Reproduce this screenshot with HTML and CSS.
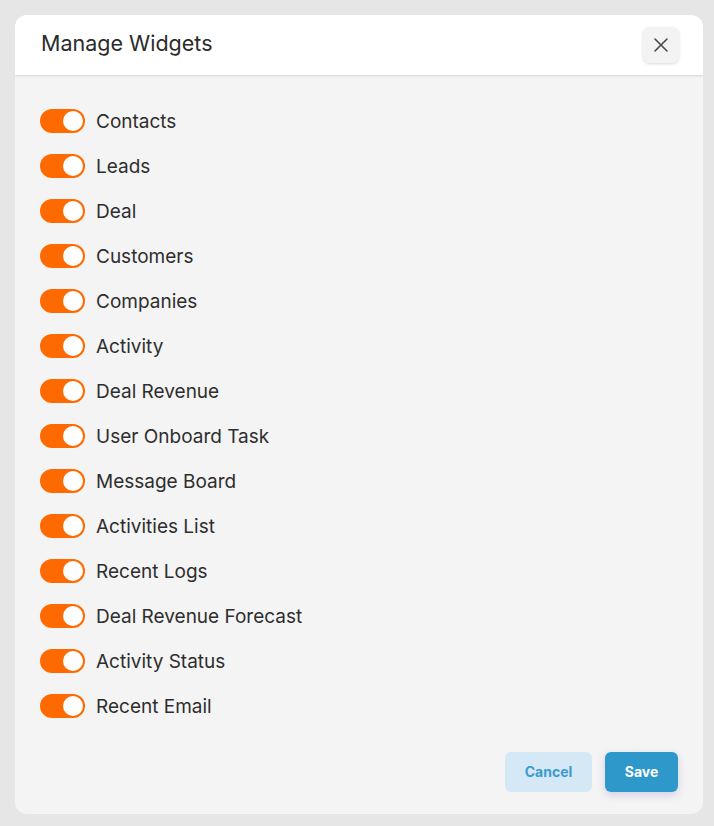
FILE: index.html
```html
<!DOCTYPE html>
<html lang="en">
<head>
    <meta charset="UTF-8">
    <meta name="viewport" content="width=device-width, initial-scale=1.0">
    <title>Manage Widgets</title>
    <link rel="stylesheet" href="styles.css">
</head>
<body>

    <div class="backdrop">
        <!-- Modal -->
        <div class="modal">
            <header class="modal-header">
                <h2>Manage Widgets</h2>
                <button class="close-btn" type="button" aria-label="Close">
                    <svg width="16" height="16" viewBox="0 0 16 16">
                        <path d="M2 2 L14 14 M14 2 L2 14" stroke="#4a4a4a" stroke-width="1.6" stroke-linecap="round"/>
                    </svg>
                </button>
            </header>

            <div class="modal-body">
                <ul class="widget-list">
                    <li><span class="toggle"></span>Contacts</li>
                    <li><span class="toggle"></span>Leads</li>
                    <li><span class="toggle"></span>Deal</li>
                    <li><span class="toggle"></span>Customers</li>
                    <li><span class="toggle"></span>Companies</li>
                    <li><span class="toggle"></span>Activity</li>
                    <li><span class="toggle"></span>Deal Revenue</li>
                    <li><span class="toggle"></span>User Onboard Task</li>
                    <li><span class="toggle"></span>Message Board</li>
                    <li><span class="toggle"></span>Activities List</li>
                    <li><span class="toggle"></span>Recent Logs</li>
                    <li><span class="toggle"></span>Deal Revenue Forecast</li>
                    <li><span class="toggle"></span>Activity Status</li>
                    <li><span class="toggle"></span>Recent Email</li>
                </ul>

                <div class="modal-footer">
                    <button class="btn btn-cancel" type="button">Cancel</button>
                    <button class="btn btn-save" type="button">Save</button>
                </div>
            </div>
        </div>
    </div>

</body>
</html>
```

FILE: styles.css
```css
/* Reset */
body, h2, ul, li, button {
    margin: 0;
    padding: 0;
}

body {
    font-family: "Inter", "Lato", sans-serif;
    background-color: #e6e6e6;
    color: #2e2e2e;
}

.backdrop {
    padding: 15px 11px 12px 15px;
}

/* Modal */
.modal {
    height: 799px;
    background-color: #f4f4f4;
    border-radius: 12px;
    overflow: hidden;
    display: flex;
    flex-direction: column;
}

.modal-header {
    height: 60px;
    background-color: #fff;
    display: flex;
    align-items: center;
    justify-content: space-between;
    padding: 0 24px 0 26px;
    box-shadow: 0 1px 2px rgba(0, 0, 0, 0.12);
    position: relative;
}

.modal-header h2 {
    font-size: 21.5px;
    font-weight: 400;
    color: #2b2b2b;
    padding-bottom: 4px;
}

.close-btn {
    width: 36px;
    height: 36px;
    border: none;
    border-radius: 7px;
    background-color: #f3f3f3;
    box-shadow: 0 1px 3px rgba(0, 0, 0, 0.15);
    display: flex;
    align-items: center;
    justify-content: center;
    cursor: pointer;
}

.modal-body {
    flex: 1;
    display: flex;
    flex-direction: column;
    padding: 23px 25px 22px 25px;
}

/* Widget list */
.widget-list {
    list-style: none;
}

.widget-list li {
    height: 45px;
    display: flex;
    align-items: center;
    gap: 11px;
    font-size: 19px;
    padding-top: 2px;
    box-sizing: border-box;
}

.toggle {
    width: 45px;
    height: 24px;
    border-radius: 12px;
    background-color: #ff6a00;
    position: relative;
    flex-shrink: 0;
    margin-top: -2px;
}

.toggle::after {
    content: "";
    position: absolute;
    right: 2px;
    top: 2px;
    width: 20px;
    height: 20px;
    border-radius: 50%;
    background-color: #fff;
}

/* Footer */
.modal-footer {
    margin-top: auto;
    display: flex;
    justify-content: flex-end;
    gap: 13px;
}

.btn {
    height: 40px;
    border: none;
    border-radius: 6px;
    font-family: inherit;
    font-size: 14px;
    font-weight: 700;
    padding-bottom: 2px;
    cursor: pointer;
}

.btn-cancel {
    width: 87px;
    background-color: #d5e8f5;
    color: #3c9bd0;
}

.btn-save {
    width: 73px;
    background-color: #2d98c9;
    color: #fff;
    box-shadow: 0 3px 8px rgba(80, 60, 160, 0.2);
}
```
